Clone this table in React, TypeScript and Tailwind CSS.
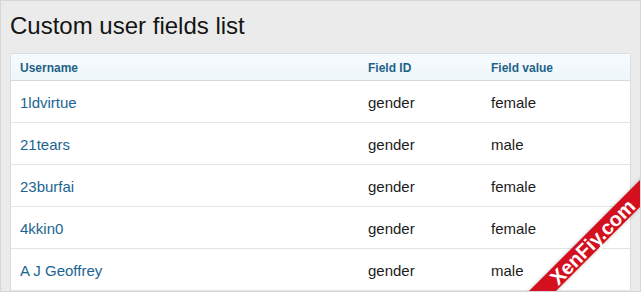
import React from 'react';

interface FieldRow {
  username: string;
  fieldId: string;
  value: string;
}

const rows: FieldRow[] = [
  { username: '1ldvirtue', fieldId: 'gender', value: 'female' },
  { username: '21tears', fieldId: 'gender', value: 'male' },
  { username: '23burfai', fieldId: 'gender', value: 'female' },
  { username: '4kkin0', fieldId: 'gender', value: 'female' },
  { username: 'A J Geoffrey', fieldId: 'gender', value: 'male' },
];

export default function App() {
  return (
    <div className="relative w-[641px] h-[292px] overflow-hidden bg-[#ebebeb] border border-[#d6d6d6] font-['Liberation_Sans',Arial,sans-serif]">
      {/* Page title */}
      <h1 className="pl-[9px] pt-[10px] text-[24px] leading-[30px] text-[#141414]">Custom user fields list</h1>

      {/* Table card */}
      <div className="ml-[9px] mt-[12px] w-[621px] bg-white border border-[#d9dde0] rounded-t-[3px]">
        <div className="grid grid-cols-[348px_123px_1fr] h-[27px] pt-[1px] items-center bg-gradient-to-b from-[#f6fbfd] to-[#eef6fa] border-b border-[#d3d9dc] text-[12px] font-bold text-[#1f6288]">
          <div className="pl-[9px]">Username</div>
          <div className="pl-[9px]">Field ID</div>
          <div className="pl-[9px]">Field value</div>
        </div>
        {rows.map((row) => (
          <div
            key={row.username}
            className="grid grid-cols-[348px_123px_1fr] h-[42px] pt-[3px] items-center border-b border-[#e4e4e4] text-[15px] text-[#1c1c1c]"
          >
            <div className="pl-[9px] text-[#1b6592]">{row.username}</div>
            <div className="pl-[9px]">{row.fieldId}</div>
            <div className="pl-[9px]">{row.value}</div>
          </div>
        ))}
      </div>

      {/* Watermark ribbon */}
      <div className="absolute left-[491px] top-[231px] w-[200px] h-[19px] -rotate-45 bg-[#d4101f] shadow-[0_0_4px_rgba(0,0,0,0.25)] flex items-center justify-center">
        <span className="text-white font-bold text-[20px] leading-none">XenFiy.com</span>
      </div>
    </div>
  );
}
